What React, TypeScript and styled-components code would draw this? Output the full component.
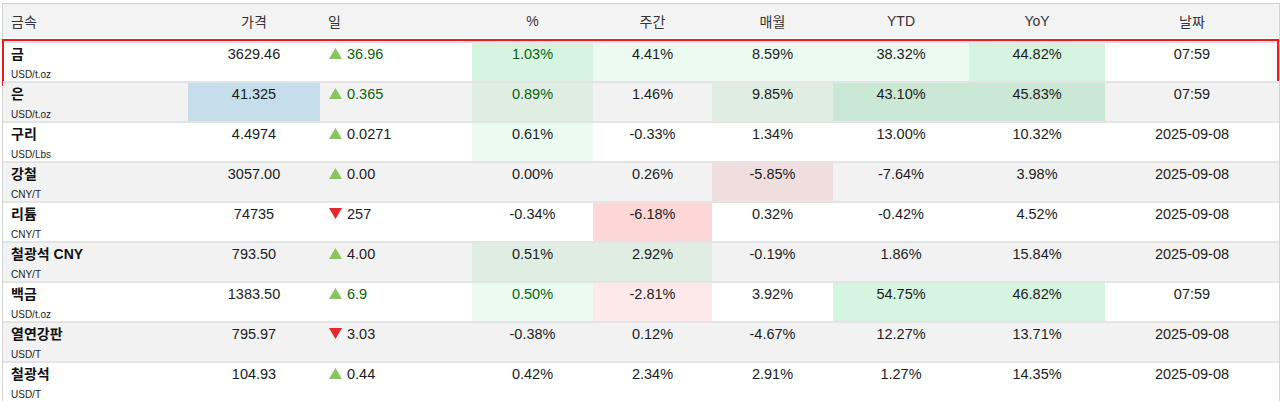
import React from "react";
import styled, { createGlobalStyle } from "styled-components";

const GlobalStyle = createGlobalStyle`
  html, body {
    margin: 0;
    padding: 0;
    background: #ffffff;
  }
  body {
    font-family: "Liberation Sans", Arial, "Noto Sans CJK KR", sans-serif;
    color: #1c1c1c;
    overflow: hidden;
  }
`;

type Tone = "g1" | "g2" | "r1" | "r2" | "b";
type Align = "left" | "center";

const COLUMNS = "185px 132px 152px 121px 119px 121px 136px 136px 174px";

const toneColors: Record<Tone, { white: string; gray: string }> = {
  g1: { white: "#ebfbf1", gray: "#dfede3" },
  g2: { white: "#d6f5e0", gray: "#cbe8d4" },
  r1: { white: "#fde9e9", gray: "#f0dede" },
  r2: { white: "#fdd6d6", gray: "#f2cccc" },
  b: { white: "#c9e3ee", gray: "#c4dfeb" },
};

const Table = styled.div`
  margin: 3px 0 0 2px;
  width: 1278px;
  box-sizing: border-box;
  border-left: 1px solid #d4d4d4;
  border-right: 1px solid #d4d4d4;
  border-top: 1px solid #cfcfcf;
  display: flex;
  flex-direction: column;
`;

const HeaderRow = styled.div`
  display: grid;
  grid-template-columns: ${COLUMNS};
  height: 33px;
  background: #f3f3f3;
  margin-bottom: 4px;
`;

const HeaderCell = styled.div<{ $align: Align }>`
  display: flex;
  align-items: center;
  justify-content: ${(p) => (p.$align === "left" ? "flex-start" : "center")};
  padding-left: ${(p) => (p.$align === "left" ? "8px" : "0")};
  font-size: 14px;
  color: #333333;
`;

const Row = styled.div<{ $striped: boolean }>`
  position: relative;
  display: grid;
  grid-template-columns: ${COLUMNS};
  height: 40px;
  box-sizing: border-box;
  border-top: 2px solid #e4e4e6;
  background: ${(p) => (p.$striped ? "#f2f2f2" : "#ffffff")};
`;

const Highlight = styled.div`
  position: absolute;
  top: -4px;
  left: -1px;
  right: 0;
  bottom: -5px;
  border: 2px solid #ee1c1c;
  pointer-events: none;
`;

const Cell = styled.div<{ $align: Align; $tone?: Tone; $striped: boolean; $live?: boolean }>`
  display: flex;
  justify-content: ${(p) => (p.$align === "left" ? "flex-start" : "center")};
  align-items: flex-start;
  padding: 2px 0 0 ${(p) => (p.$align === "left" ? "9px" : "0")};
  font-size: 14.5px;
  line-height: 18px;
  color: ${(p) => (p.$live ? "#0b620b" : "#1c1c1c")};
  background: ${(p) =>
    p.$tone ? toneColors[p.$tone][p.$striped ? "gray" : "white"] : "transparent"};
`;

const NameCell = styled.div`
  display: flex;
  flex-direction: column;
  padding: 2px 0 0 8px;
`;

const Name = styled.span`
  font-size: 14px;
  line-height: 18px;
  font-weight: 700;
  color: #111111;
`;

const Unit = styled.span`
  margin-top: 6px;
  font-size: 10px;
  line-height: 12px;
  color: #222222;
`;

const Day = styled.span`
  display: inline-flex;
  align-items: center;
  gap: 5px;
`;

const Arrow = ({ dir }: { dir: "up" | "down" }) => (
  <svg width="13" height="11" viewBox="0 0 13 11" style={{ marginTop: -1 }}>
    {dir === "up" ? (
      <polygon points="6.5,0 13,11 0,11" fill="#86c75c" />
    ) : (
      <polygon points="0,0 13,0 6.5,11" fill="#e5262c" />
    )}
  </svg>
);

type Key = "price" | "pct" | "week" | "month" | "ytd" | "yoy";

interface Metal {
  name: string;
  unit: string;
  price: string;
  dir: "up" | "down";
  day: string;
  pct: string;
  week: string;
  month: string;
  ytd: string;
  yoy: string;
  date: string;
  live?: boolean;
  tones?: Partial<Record<Key, Tone>>;
  selected?: boolean;
}

const metals: Metal[] = [
  { name: "금", unit: "USD/t.oz", price: "3629.46", dir: "up", day: "36.96", pct: "1.03%", week: "4.41%", month: "8.59%", ytd: "38.32%", yoy: "44.82%", date: "07:59", live: true, selected: true, tones: { pct: "g2", week: "g1", month: "g1", ytd: "g1", yoy: "g2" } },
  { name: "은", unit: "USD/t.oz", price: "41.325", dir: "up", day: "0.365", pct: "0.89%", week: "1.46%", month: "9.85%", ytd: "43.10%", yoy: "45.83%", date: "07:59", live: true, tones: { price: "b", pct: "g1", month: "g1", ytd: "g2", yoy: "g2" } },
  { name: "구리", unit: "USD/Lbs", price: "4.4974", dir: "up", day: "0.0271", pct: "0.61%", week: "-0.33%", month: "1.34%", ytd: "13.00%", yoy: "10.32%", date: "2025-09-08", tones: { pct: "g1" } },
  { name: "강철", unit: "CNY/T", price: "3057.00", dir: "up", day: "0.00", pct: "0.00%", week: "0.26%", month: "-5.85%", ytd: "-7.64%", yoy: "3.98%", date: "2025-09-08", tones: { month: "r1" } },
  { name: "리튬", unit: "CNY/T", price: "74735", dir: "down", day: "257", pct: "-0.34%", week: "-6.18%", month: "0.32%", ytd: "-0.42%", yoy: "4.52%", date: "2025-09-08", tones: { week: "r2" } },
  { name: "철광석 CNY", unit: "CNY/T", price: "793.50", dir: "up", day: "4.00", pct: "0.51%", week: "2.92%", month: "-0.19%", ytd: "1.86%", yoy: "15.84%", date: "2025-09-08", tones: { pct: "g1", week: "g1" } },
  { name: "백금", unit: "USD/t.oz", price: "1383.50", dir: "up", day: "6.9", pct: "0.50%", week: "-2.81%", month: "3.92%", ytd: "54.75%", yoy: "46.82%", date: "07:59", live: true, tones: { pct: "g1", week: "r1", ytd: "g2", yoy: "g2" } },
  { name: "열연강판", unit: "USD/T", price: "795.97", dir: "down", day: "3.03", pct: "-0.38%", week: "0.12%", month: "-4.67%", ytd: "12.27%", yoy: "13.71%", date: "2025-09-08" },
  { name: "철광석", unit: "USD/T", price: "104.93", dir: "up", day: "0.44", pct: "0.42%", week: "2.34%", month: "2.91%", ytd: "1.27%", yoy: "14.35%", date: "2025-09-08" },
];

const headers: { label: string; align: Align }[] = [
  { label: "금속", align: "left" },
  { label: "가격", align: "center" },
  { label: "일", align: "left" },
  { label: "%", align: "center" },
  { label: "주간", align: "center" },
  { label: "매월", align: "center" },
  { label: "YTD", align: "center" },
  { label: "YoY", align: "center" },
  { label: "날짜", align: "center" },
];

export default function App() {
  return (
    <>
      <GlobalStyle />
      <Table>
        <HeaderRow>
          {headers.map((h) => (
            <HeaderCell key={h.label} $align={h.align}>
              {h.label}
            </HeaderCell>
          ))}
        </HeaderRow>
        {metals.map((m, i) => {
          const striped = i % 2 === 1;
          const t = m.tones || {};
          return (
            <Row key={m.name + m.unit} $striped={striped}>
              <NameCell>
                <Name>{m.name}</Name>
                <Unit>{m.unit}</Unit>
              </NameCell>
              <Cell $align="center" $striped={striped} $tone={t.price}>
                {m.price}
              </Cell>
              <Cell $align="left" $striped={striped} $live={m.live}>
                <Day>
                  <Arrow dir={m.dir} />
                  {m.day}
                </Day>
              </Cell>
              <Cell $align="center" $striped={striped} $tone={t.pct} $live={m.live}>
                {m.pct}
              </Cell>
              <Cell $align="center" $striped={striped} $tone={t.week}>
                {m.week}
              </Cell>
              <Cell $align="center" $striped={striped} $tone={t.month}>
                {m.month}
              </Cell>
              <Cell $align="center" $striped={striped} $tone={t.ytd}>
                {m.ytd}
              </Cell>
              <Cell $align="center" $striped={striped} $tone={t.yoy}>
                {m.yoy}
              </Cell>
              <Cell $align="center" $striped={striped}>
                {m.date}
              </Cell>
              {m.selected && <Highlight />}
            </Row>
          );
        })}
      </Table>
    </>
  );
}
